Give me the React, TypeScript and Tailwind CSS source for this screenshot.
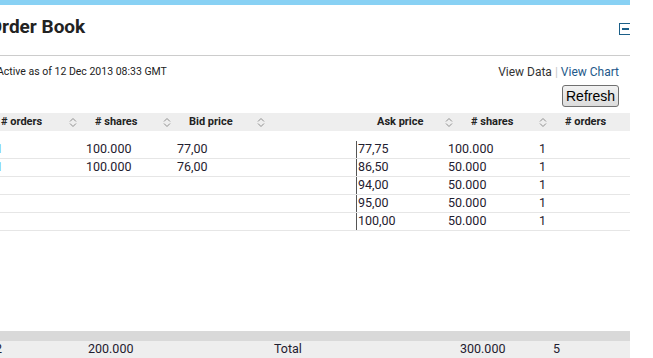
import React from "react";

const bids = [
  { orders: "1", shares: "100.000", price: "77,00" },
  { orders: "1", shares: "100.000", price: "76,00" },
  null,
  null,
  null,
];

const asks = [
  { price: "77,75", shares: "100.000", orders: "1" },
  { price: "86,50", shares: "50.000", orders: "1" },
  { price: "94,00", shares: "50.000", orders: "1" },
  { price: "95,00", shares: "50.000", orders: "1" },
  { price: "100,00", shares: "50.000", orders: "1" },
];

const headers = ["# orders", "# shares", "Bid price", "", "Ask price", "# shares", "# orders"];

function SortIcon() {
  return (
    <svg width="8" height="11" viewBox="0 0 8 11" fill="none" stroke="#8f8f8f" strokeWidth="1">
      <path d="M1 4.5 L4 1.5 L7 4.5" />
      <path d="M1 6.5 L4 9.5 L7 6.5" />
    </svg>
  );
}

export default function App() {
  return (
    <div className="w-[653px] h-[358px] bg-white overflow-hidden font-['Roboto',sans-serif] text-[#1f2030]">
      <div className="w-[630px] h-[358px] overflow-hidden">
        <div className="h-[5px] w-[630px] bg-[#88d1f4]" />
        <div className="w-[642px] -ml-[12px] flex flex-col">
          {/* title bar */}
          <div className="h-[51px] border-b border-[#cccccc] flex justify-between items-start">
            <h1 className="pt-[9px] pl-[1px] text-[19px] leading-[25px] font-bold text-[#222]">Order Book</h1>
            <div className="mt-[18px] mr-[-1px] w-[12px] h-[12px] border-[1.5px] border-[#1b5f88] flex items-center justify-center">
              <div className="w-[7px] h-[2px] bg-[#1b5f88]" />
            </div>
          </div>

          {/* info line */}
          <div className="mt-[8px] h-[16px] flex justify-between items-center leading-[16px] pr-[11px]">
            <span className="pl-[9px] text-[10.5px] text-[#222]">Active as of 12 Dec 2013 08:33 GMT</span>
            <span className="text-[12px]">
              <a className="text-[#333]">View Data</a>
              <span className="text-[#c8c8c8] px-[3px]">|</span>
              <a className="text-[#24598a]">View Chart</a>
            </span>
          </div>

          <div className="mt-[5px] flex justify-end pr-[11px]">
            <button className="h-[22px] w-[57px] rounded-[3px] border border-[#707070] bg-gradient-to-b from-[#f2f2f2] to-[#dcdcdc] text-[14px] font-['Liberation_Sans',Arial,sans-serif] text-black leading-none">
              Refresh
            </button>
          </div>
        </div>

        {/* table header */}
        <div className="mt-[6px] h-[18px] w-[630px] bg-[#eeeeee] flex items-center text-[11px] font-bold text-[#222] whitespace-nowrap">
          {headers.map((h, i) => (
            <div key={i} className="w-[94px] shrink-0 flex items-center justify-between pl-[1px] pr-[17px]">
              <span>{h}</span>
              {h && <SortIcon />}
            </div>
          ))}
        </div>

        {/* rows */}
        <div className="mt-[10px] w-[630px] overflow-hidden">
          <div className="-ml-[12px] w-[660px]">
            {asks.map((a, i) => {
              const b = bids[i];
              return (
                <div key={i} className="h-[18px] flex text-[12.5px] leading-[16px] border-b border-[#e6e6e6] pl-[8px] whitespace-nowrap">
                  <div className="w-[90px] shrink-0 text-[#6cc4ee]">{b ? b.orders : ""}</div>
                  <div className="w-[91px] shrink-0">{b ? b.shares : ""}</div>
                  <div className="w-[91px] shrink-0">{b ? b.price : ""}</div>
                  <div className="w-[88px] shrink-0" />
                  <div className="w-[92px] shrink-0 border-l border-[#555] pl-[1px]">{a.price}</div>
                  <div className="w-[91px] shrink-0">{a.shares}</div>
                  <div className="w-[91px] shrink-0">{a.orders}</div>
                </div>
              );
            })}
          </div>
        </div>

        {/* footer */}
        <div className="mt-[100px] h-[10px] w-[630px] bg-[#d9d9d9]" />
        <div className="h-[17px] w-[630px] bg-[#eeeeee] overflow-hidden">
          <div className="-ml-[12px] w-[680px] pl-[7px] flex text-[12.5px] leading-[16px] whitespace-nowrap">
            {["2", "200.000", "", "Total", "", "300.000", "5"].map((t, i) => (
              <div key={i} className="w-[93px] shrink-0">{t}</div>
            ))}
          </div>
        </div>
      </div>
    </div>
  );
}
